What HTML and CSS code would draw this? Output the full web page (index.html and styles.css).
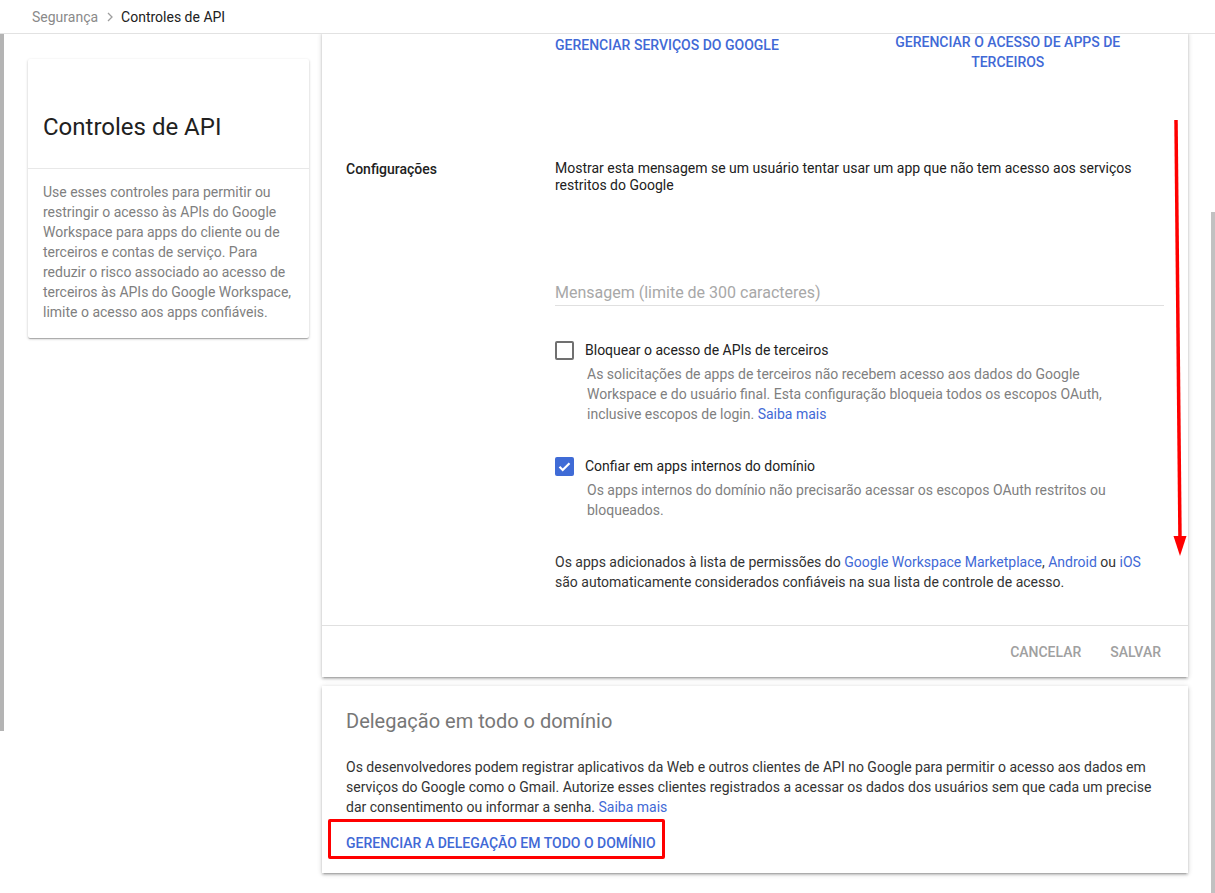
FILE: index.html
```html
<!DOCTYPE html>
<html lang="pt-BR">
<head>
    <meta charset="UTF-8">
    <meta name="viewport" content="width=device-width, initial-scale=1.0">
    <title>Controles de API</title>
    <link rel="stylesheet" href="styles.css">
</head>
<body>

<div class="window-edge"></div>
<div class="scroll-thumb"></div>

<div class="topbar">
    <span class="crumb">Segurança</span>
    <svg class="crumb-sep" width="6" height="10" viewBox="0 0 6 10"><path d="M1 1l4 4-4 4" fill="none" stroke="#9e9e9e" stroke-width="1.3"/></svg>
    <span class="crumb-current">Controles de API</span>
</div>

<div class="layout">
    <aside class="side">
        <div class="side-card">
            <h1 class="side-title">Controles de API</h1>
            <p class="side-text">Use esses controles para permitir ou restringir o acesso às APIs do Google Workspace para apps do cliente ou de terceiros e contas de serviço. Para reduzir o risco associado ao acesso de terceiros às APIs do Google Workspace, limite o acesso aos apps confiáveis.</p>
        </div>
    </aside>

    <main class="main">
        <section class="card">
            <div class="links-row">
                <div class="links-cell first"><a href="#" class="action">GERENCIAR SERVIÇOS DO GOOGLE</a></div>
                <div class="links-cell second"><a href="#" class="action">GERENCIAR O ACESSO DE APPS DE TERCEIROS</a></div>
            </div>

            <div class="setting">
                <div class="setting-label">Configurações</div>
                <div class="setting-body">
                    <p class="msg-text">Mostrar esta mensagem se um usuário tentar usar um app que não tem acesso aos serviços restritos do Google</p>
                    <div class="msg-field">
                        <input type="text" placeholder="Mensagem (limite de 300 caracteres)">
                    </div>

                    <div class="check-row">
                        <span class="box"></span>
                        <div>
                            <div class="check-label">Bloquear o acesso de APIs de terceiros</div>
                            <p class="check-desc">As solicitações de apps de terceiros não recebem acesso aos dados do Google Workspace e do usuário final. Esta configuração bloqueia todos os escopos OAuth, inclusive escopos de login. <a href="#" class="link">Saiba mais</a></p>
                        </div>
                    </div>

                    <div class="check-row second">
                        <span class="box checked">
                            <svg width="19" height="19" viewBox="0 0 19 19"><path d="M4.5 9.8l3.2 3.2 6.8-6.8" fill="none" stroke="#fff" stroke-width="2.2"/></svg>
                        </span>
                        <div>
                            <div class="check-label">Confiar em apps internos do domínio</div>
                            <p class="check-desc">Os apps internos do domínio não precisarão acessar os escopos OAuth restritos ou bloqueados.</p>
                        </div>
                    </div>

                    <p class="note">Os apps adicionados à lista de permissões do <a href="#" class="link">Google Workspace Marketplace</a>, <a href="#" class="link">Android</a> ou <a href="#" class="link">iOS</a> são automaticamente considerados confiáveis na sua lista de controle de acesso.</p>
                </div>
            </div>

            <div class="card-footer">
                <button class="flat-btn">CANCELAR</button>
                <button class="flat-btn">SALVAR</button>
            </div>
        </section>

        <section class="card delegation">
            <h2 class="card-title">Delegação em todo o domínio</h2>
            <p class="card-text">Os desenvolvedores podem registrar aplicativos da Web e outros clientes de API no Google para permitir o acesso aos dados em serviços do Google como o Gmail. Autorize esses clientes registrados a acessar os dados dos usuários sem que cada um precise dar consentimento ou informar a senha. <a href="#" class="link">Saiba mais</a></p>
            <div class="highlight"><a href="#" class="action">GERENCIAR A DELEGAÇÃO EM TODO O DOMÍNIO</a></div>
        </section>
    </main>
</div>

<svg class="annot-arrow" width="30" height="460" viewBox="0 0 30 460">
    <path d="M11 10L15 430" stroke="#f00" stroke-width="3.5" fill="none"/>
    <path d="M8.5 426L21.5 426L15 446Z" fill="#f00"/>
</svg>

</body>
</html>
```

FILE: styles.css
```css
body {
    margin: 0;
    font-family: Roboto, "Liberation Sans", Arial, sans-serif;
    font-size: 14px;
    color: #212121;
    background-color: #fff;
}
p {
    margin: 0;
}
a {
    text-decoration: none;
}
.window-edge {
    position: absolute;
    left: 0;
    top: 0;
    width: 4px;
    height: 731px;
    background-color: #b4b4b4;
}
.scroll-thumb {
    position: absolute;
    left: 1211px;
    top: 212px;
    width: 4px;
    height: 681px;
    background-color: #c1c1c1;
}
.topbar {
    position: relative;
    z-index: 2;
    height: 33px;
    border-bottom: 1px solid #e2e2e2;
    background-color: #fff;
    display: flex;
    align-items: center;
    padding-left: 32px;
}
.crumb {
    color: #8a8a8a;
}
.crumb-sep {
    margin: 1px 8px 0 9px;
}
.crumb-current {
    color: #212121;
}
.layout {
    display: flex;
    align-items: flex-start;
    padding-bottom: 20px;
}
.side {
    width: 281px;
    margin-left: 28px;
    margin-top: 25px;
}
.side-card {
    background-color: #fff;
    border-radius: 2px;
    box-shadow: 0 1px 3px rgba(0,0,0,.2), 0 1px 1px rgba(0,0,0,.14), 0 2px 1px -1px rgba(0,0,0,.12);
}
.side-title {
    margin: 0;
    padding: 52px 15px 25px;
    font-size: 24px;
    line-height: 32px;
    font-weight: 400;
    color: #212121;
    border-bottom: 1px solid #e8e8e8;
}
.side-text {
    padding: 13px 15px 16px;
    line-height: 20px;
    color: #808080;
}
.main {
    width: 866px;
    margin-left: 13px;
}
.card {
    background-color: #fff;
    box-shadow: 0 2px 2px 0 rgba(0,0,0,.14), 0 3px 1px -2px rgba(0,0,0,.12), 0 1px 5px 0 rgba(0,0,0,.2);
}
.action {
    font-weight: 500;
    color: #4169d6;
    line-height: 20px;
}
.link {
    color: #4169d6;
}
.links-row {
    display: grid;
    grid-template-columns: 304.5px 304.5px;
    margin-left: 233px;
    margin-top: -2px;
}
.links-cell.first {
    padding-top: 3px;
}
.links-cell.second {
    padding: 0 24px 0 16px;
    text-align: center;
}
.setting {
    display: flex;
    padding: 88px 24px 33px;
}
.setting-label {
    width: 209px;
    flex-shrink: 0;
    font-weight: 500;
    line-height: 18px;
}
.setting-body {
    width: 609px;
}
.msg-text {
    line-height: 17px;
}
.msg-field {
    margin-top: 89px;
    border-bottom: 1px solid #e0e0e0;
    padding-bottom: 2px;
}
.msg-field input {
    width: 100%;
    border: none;
    outline: none;
    padding: 0;
    font-family: inherit;
    font-size: 16px;
    line-height: 20px;
    height: 20px;
}
.msg-field input::placeholder {
    color: #a8a8a8;
}
.check-row {
    display: flex;
    margin-top: 34px;
}
.check-row.second {
    margin-top: 32px;
}
.box {
    width: 19px;
    height: 19px;
    box-sizing: border-box;
    border: 2px solid #707070;
    border-radius: 2px;
    margin-top: 1px;
    margin-right: 11px;
    flex-shrink: 0;
}
.box.checked {
    border: none;
    background-color: #3f6bd6;
}
.box.checked svg {
    display: block;
}
.check-label {
    line-height: 20px;
}
.check-desc {
    margin-top: 4px;
    margin-left: 2px;
    max-width: 540px;
    line-height: 20px;
    color: #808080;
}
.note {
    margin-top: 32px;
    max-width: 600px;
    line-height: 20px;
    color: #333;
}
.card-footer {
    border-top: 1px solid #e0e0e0;
    height: 51px;
    display: flex;
    align-items: center;
    justify-content: flex-end;
    padding-right: 19px;
}
.flat-btn {
    font-family: inherit;
    font-size: 14px;
    font-weight: 500;
    color: #a0a0a0;
    background: none;
    border: none;
    padding: 0 8px;
    margin-left: 13px;
    line-height: 36px;
}
.delegation {
    margin-top: 9px;
    padding: 21px 24px 14px;
}
.card-title {
    margin: 0;
    font-size: 20px;
    line-height: 28px;
    font-weight: 400;
    color: #777;
}
.card-text {
    margin-top: 22px;
    line-height: 20px;
    color: #333;
}
.highlight {
    display: inline-block;
    margin-top: 2px;
    margin-left: -18px;
    border: 3px solid #f00;
    border-radius: 2px;
    padding: 11px 6px 3px 15px;
}
.annot-arrow {
    position: absolute;
    left: 1165px;
    top: 110px;
}
```
